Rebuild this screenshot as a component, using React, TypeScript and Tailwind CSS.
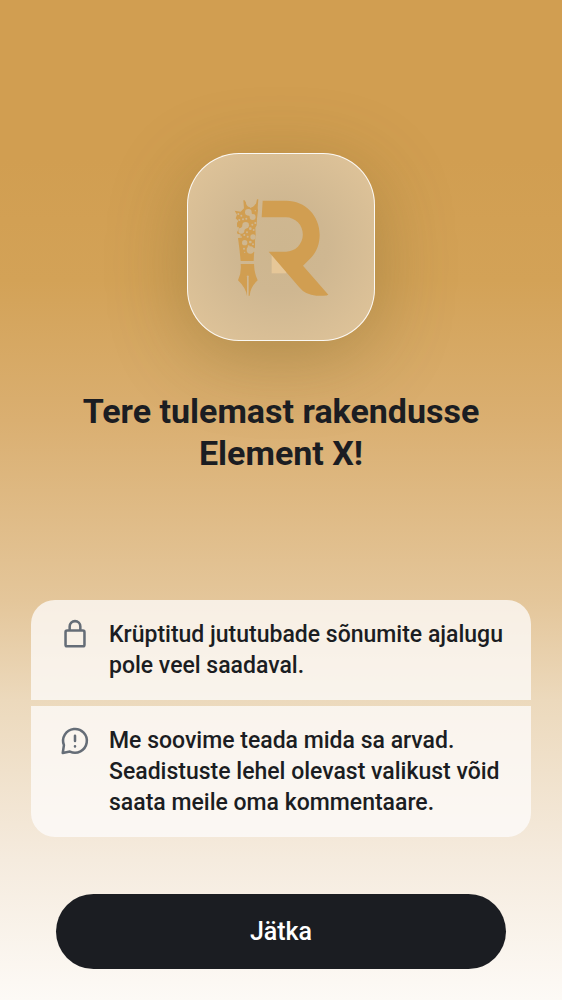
import React from "react";

function BrandMark() {
  return (
    <svg viewBox="190 174 288 297" className="h-[99px] w-24" role="img" aria-label="R">
      <mask id="lace" maskUnits="userSpaceOnUse" x="190" y="170" width="80" height="200">
        <rect x="190" y="170" width="80" height="200" fill="#fff" />
        <g fill="#000" stroke="#000" strokeWidth="0">
          <circle cx="243" cy="188" r="14" />
          <circle cx="236" cy="217" r="10" />
          <circle cx="249" cy="231" r="9" />
          <path d="M236 217L249 231" strokeWidth="10" />
          <circle cx="257" cy="212" r="2" />
          <circle cx="206" cy="222" r="3" />
          <circle cx="215" cy="227" r="3" />
          <circle cx="220" cy="238" r="3" />
          <circle cx="209" cy="240" r="3" />
          <circle cx="230" cy="236" r="3" />
          <circle cx="257" cy="249" r="3" />
          <circle cx="248" cy="254" r="3" />
          <circle cx="228" cy="256" r="10" />
          <circle cx="215" cy="272" r="9" />
          <path d="M228 256L215 272" strokeWidth="12" />
          <circle cx="205" cy="264" r="3" />
          <circle cx="242" cy="266" r="4" />
          <circle cx="252" cy="270" r="3" />
          <circle cx="232" cy="277" r="3" />
          <circle cx="224" cy="285" r="3" />
          <circle cx="234" cy="290" r="3" />
          <circle cx="215" cy="291" r="2" />
          <circle cx="250" cy="291" r="8" />
          <circle cx="225" cy="308" r="8" />
          <circle cx="242" cy="306" r="4" />
          <circle cx="237" cy="319" r="3" />
          <circle cx="250" cy="313" r="3" />
          <circle cx="242" cy="330" r="11" />
          <circle cx="254" cy="330" r="6" />
          <circle cx="223" cy="326" r="3" />
          <circle cx="225" cy="337" r="2" />
        </g>
      </mask>
      <g fill="#d19e51">
        <path
          mask="url(#lace)"
          d="M195 212L213 215L223 205L221 181H225L230 190L243 204L259 191L262 178H266L264 203L265 211L262 236L261 256L257 263L258 286L256 302L256 320L253 342L252 363H213L209 325L205 294L214 293L212 283L204 282L202 277L207 268L202 259L202 249L206 243L198 235L202 224Z"
        />
        <path d="M213 372H253Q253 397 264 421C249 435 242 447 240 467L237 468V411A3 3 0 1 0 232 411V468Q229 444 205 421Q216 399 213 372Z" />
      </g>
      <path d="M306 345H350V400H306Z" fill="#e6c798" />
      <path
        fill="#d19e51"
        d="M279 182H350C407 182 450 227 450 284C450 313 440 336 424 353L400 377L476 464Q473 467 461 467H440Q407 465 388 441L297 335H349A50 51 0 0 0 349 232H276Z"
      />
    </svg>
  );
}

function LockIcon() {
  return (
    <svg viewBox="0 0 24 24" className="size-8" fill="none" stroke="#656d77" strokeWidth="1.9" aria-hidden="true">
      <rect x="4.9" y="8.7" width="14.2" height="11.8" rx="1.2" />
      <path d="M8 8.7V5.6a4 4 0 0 1 8 0v3.1" />
    </svg>
  );
}

function FeedbackIcon() {
  return (
    <svg viewBox="0 0 24 24" className="size-8" fill="none" stroke="#656d77" strokeWidth="1.9" strokeLinecap="round" strokeLinejoin="round" aria-hidden="true">
      <path d="M3.7 15.1a8.9 8.9 0 1 1 4.5 4.8L2.8 21Z" />
      <path d="M12 8v4M12 16v.1" />
    </svg>
  );
}

const notices = [
  { icon: <LockIcon />, text: "Krüptitud jututubade sõnumite ajalugu pole veel saadaval." },
  { icon: <FeedbackIcon />, text: "Me soovime teada mida sa arvad. Seadistuste lehel olevast valikust võid saata meile oma kommentaare." },
];

export default function App() {
  return (
    <main className="flex min-h-screen flex-col bg-[linear-gradient(180deg,#d19e51_0%,#d19e51_16%,#d3a257_28%,#daaf71_42%,#e4c69a_60%,#ecd9bc_70%,#f5ebde_86%,#fdfaf6_100%)] px-[31px] pt-[153px] pb-[31px] font-[Roboto,sans-serif] text-[#1b1d22]">
      <div className="mx-auto flex size-[188px] items-center justify-center rounded-[52px] border border-white/90 bg-[radial-gradient(circle,#cdb68f_0%,#cfb791_35%,#ddc298_85%)] shadow-[0_16px_80px_rgba(90,80,30,0.32)]">
        <BrandMark />
      </div>
      <h1 className="mx-auto mt-[49px] max-w-[440px] text-center text-[34px] leading-[42px] font-bold">
        Tere tulemast rakendusse Element X!
      </h1>
      <ul className="mt-auto flex flex-col gap-1.5 overflow-hidden rounded-3xl">
        {notices.map((notice) => (
          <li key={notice.text} className="flex gap-[18px] bg-[#fdfcfc]/75 py-[19px] pr-5 pl-7">
            <span className="shrink-0">{notice.icon}</span>
            <p className="text-[23px] leading-[31px] font-medium">{notice.text}</p>
          </li>
        ))}
      </ul>
      <button type="button" className="mx-[25px] mt-[57px] h-[75px] rounded-full bg-[#1b1d22] text-[25px] font-medium text-white">
        Jätka
      </button>
    </main>
  );
}
